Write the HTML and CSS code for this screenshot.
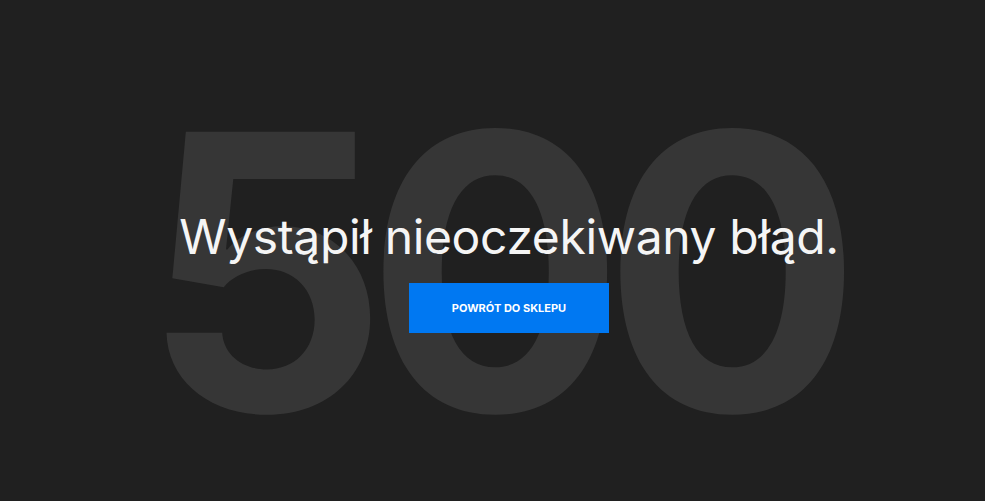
FILE: index.html
```html
<!DOCTYPE html>
<html lang="pl">
<head>
    <meta charset="UTF-8">
    <meta name="viewport" content="width=device-width, initial-scale=1.0">
    <title>Błąd 500</title>
    <link rel="stylesheet" href="styles.css">
</head>
<body>
<main class="error-page">
    <div class="error-stack">
        <div class="error-code">500</div>
        <div class="error-content">
            <h1>Wystąpił nieoczekiwany błąd.</h1>
            <a class="error-button" href="#">Powrót do sklepu</a>
        </div>
    </div>
</main>
</body>
</html>
```

FILE: styles.css
```css
* {
    box-sizing: border-box;
}

body {
    margin: 0;
    font-family: Inter, "Noto Sans", sans-serif;
    background-color: #202020;
    color: #f5f5f5;
}

.error-page {
    height: 100vh;
    padding: 42px 0 0 33px;
    display: flex;
    align-items: center;
    justify-content: center;
    overflow: hidden;
}

.error-stack {
    display: grid;
    align-items: center;
    justify-items: center;
}

.error-code,
.error-content {
    grid-area: 1 / 1;
}

.error-code {
    padding-right: 36px;
    font-size: 384px;
    font-weight: 700;
    line-height: 1;
    letter-spacing: -22px;
    color: #363636;
    user-select: none;
}

.error-content {
    display: flex;
    flex-direction: column;
    align-items: center;
    padding-bottom: 2px;
}

.error-content h1 {
    margin: 0 0 17px;
    font-size: 48px;
    font-weight: 400;
    line-height: 1.2;
    letter-spacing: -0.35px;
    white-space: nowrap;
}

.error-button {
    display: flex;
    align-items: center;
    justify-content: center;
    width: 200px;
    height: 50px;
    background-color: #0078f2;
    color: #fff;
    font-size: 11px;
    font-weight: 700;
    text-transform: uppercase;
    text-decoration: none;
}

.error-button:hover {
    background-color: #2a8ff7;
}
```
